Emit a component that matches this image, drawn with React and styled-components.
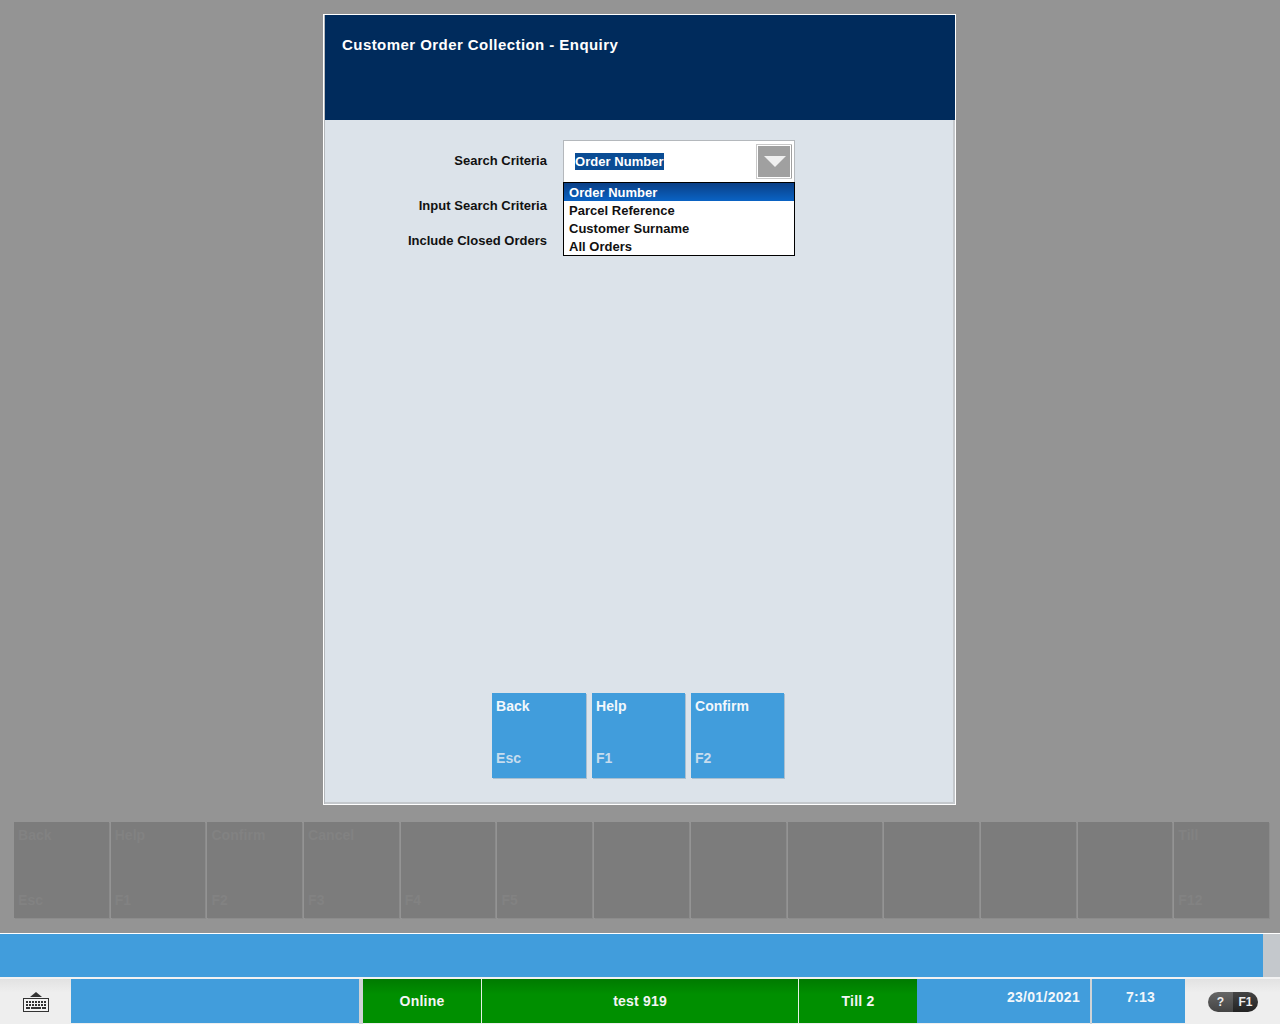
import React from 'react'
import styled, { createGlobalStyle } from 'styled-components'

const GlobalStyle = createGlobalStyle`
    html, body {
        margin: 0;
        padding: 0;
        background: #949494;
    }
    * {
        box-sizing: border-box;
    }
`

const Page = styled.div`
    width: 1280px;
    height: 1024px;
    overflow: hidden;
    display: flex;
    flex-direction: column;
    font-family: "Liberation Sans", Arial, sans-serif;
    font-weight: bold;
`

const Backdrop = styled.div`
    height: 933px;
    padding: 14px 10px 0 14px;
    background: #949494;
    display: flex;
    flex-direction: column;
`

const Dialog = styled.div`
    width: 633px;
    height: 791px;
    margin-left: 309px;
    background: #b4b8bc;
    border: 1px solid #fff;
    padding-left: 1px;
    display: flex;
    flex-direction: column;
`

const DialogHeader = styled.div`
    height: 105px;
    background: #002b5c;
    padding: 20px 17px;
    color: #fff;
    font-size: 15px;
    line-height: 20px;
    letter-spacing: 0.44px;
`

const DialogBody = styled.div`
    flex: 1;
    background: #dce3ea;
    padding: 20px 0 24px 0;
    display: flex;
    flex-direction: column;
    justify-content: space-between;
    border-bottom: 2px solid #c4c8cc;
    border-right: 2px solid #c4c8cc;
`

const Form = styled.div`
    display: grid;
    grid-template-columns: 222px 232px;
    column-gap: 16px;
    align-items: center;
    grid-template-rows: 42px 46px 24px;
`

const Label = styled.div`
    text-align: right;
    font-size: 13px;
    letter-spacing: 0.02px;
    color: #111;
    margin-bottom: ${props => props.$raise || 0}px;
`

const ComboWrap = styled.div`
    position: relative;
    height: 42px;
`

const Combo = styled.div`
    height: 42px;
    background: #fff;
    border: 1px solid #b4b8bc;
    border-bottom: 0;
    padding: 3px 2px 0 11px;
    display: flex;
    align-items: flex-start;
    justify-content: space-between;
`

const Selected = styled.span`
    margin-top: 9px;
    background: #0a4c94;
    color: #fff;
    font-size: 13px;
    line-height: 17px;
    letter-spacing: 0.05px;
`

const ComboButton = styled.div`
    width: 36px;
    height: 35px;
    background: #a0a0a0;
    border: 1px solid #c8c8c8;
    border-right-width: 0;
    outline: 1px solid #fff;
    outline-offset: -2px;
    display: flex;
    align-items: center;
    justify-content: center;
`

const Arrow = styled.div`
    width: 0;
    height: 0;
    border-left: 11px solid transparent;
    border-right: 11px solid transparent;
    border-top: 11px solid #f0f0f0;
`

const Popup = styled.div`
    position: absolute;
    top: 42px;
    left: 0;
    width: 232px;
    height: 74px;
    background: #fff;
    border: 1px solid #000;
`

const Option = styled.div`
    height: 18px;
    padding-left: 5px;
    font-size: 13px;
    line-height: 20px;
    letter-spacing: 0.02px;
    color: ${props => (props.$active ? '#fff' : '#111')};
    background: ${props => (props.$active ? 'linear-gradient(#0a3f86, #0a63c4)' : 'transparent')};
`

const Actions = styled.div`
    display: flex;
    gap: 6px;
    padding-left: 167px;
`

const ActionKey = styled.div`
    width: ${props => props.$w || 94}px;
    height: 85px;
    background: #419ddc;
    box-shadow: 1px 1px 0 #a9bfd0;
    padding: 5px 4px 12px 4px;
    display: flex;
    flex-direction: column;
    justify-content: space-between;
    font-size: 14px;
    line-height: 16px;
    letter-spacing: 0.05px;
    color: #f2f7fb;
`

const KeyHint = styled.span`
    color: #c6dcee;
`

const FnBar = styled.div`
    margin-top: 17px;
    display: grid;
    grid-template-columns: repeat(13, 1fr);
    column-gap: 2px;
    width: 1255px;
`

const FnKey = styled.div`
    height: 96px;
    background: #7c7c7c;
    box-shadow: 1px 1px 0 #8c8c8c;
    padding: 5px 4px 10px 4px;
    display: flex;
    flex-direction: column;
    justify-content: space-between;
    font-size: 14px;
    line-height: 16px;
    letter-spacing: 0.05px;
    color: #828282;
`

const MessageBar = styled.div`
    height: 46px;
    background: #419ddc;
    border-top: 1px solid #fff;
    border-bottom: 2px solid #f2f2f2;
    display: flex;
    justify-content: flex-end;
`

const ScrollStub = styled.div`
    width: 17px;
    background: #c4c8cc;
`

const StatusBar = styled.div`
    height: 45px;
    display: flex;
    background: #eeeeee;
`

const KeyboardCell = styled.div`
    width: 71px;
    display: flex;
    align-items: center;
    justify-content: center;
    background: linear-gradient(#e2e2e2, #eeeeee 30%);
    padding: 0 0 1px 0;
`

const BlueCell = styled.div`
    width: ${props => props.$w}px;
    height: 44px;
    background: #419ddc;
    color: #f2f7fb;
    font-size: 14px;
    letter-spacing: 0.3px;
    display: flex;
    justify-content: ${props => props.$justify || 'center'};
    padding: ${props => props.$pad || '10px 0 0 0'};
    line-height: 16px;
`

const Spacer = styled.div`
    width: ${props => props.$w}px;
    background: #cfd3d6;
`

const GreenCell = styled.div`
    width: ${props => props.$w}px;
    height: 44px;
    background: linear-gradient(#007a00, #008f00 35%);
    color: #f4f4f4;
    font-size: 14px;
    letter-spacing: 0.2px;
    display: flex;
    align-items: center;
    justify-content: center;
    border-right: ${props => (props.$sep ? '1px solid #e6f0e6' : '0')};
`

const HelpCell = styled.div`
    flex: 1;
    background: linear-gradient(#e2e2e2, #eeeeee 30%);
    padding: 13px 0 0 23px;
`

const HelpPill = styled.div`
    width: 50px;
    height: 20px;
    border-radius: 10px;
    overflow: hidden;
    display: flex;
    color: #eee;
    font-size: 12px;
    line-height: 20px;
    text-align: center;
`

const PillPart = styled.div`
    width: 25px;
    background: ${props => props.$bg};
`

const KeyboardIcon = () => (
    <svg width="28" height="21" viewBox="0 0 28 21">
        <path d="M8 6 L14 1 L20 6 Z" fill="#333" />
        <rect x="1.5" y="7.5" width="25" height="13" fill="#f4f4f4" stroke="#333" />
        {[10, 13].map(y =>
            [4, 7, 10, 13, 16, 19, 22].map(x => (
                <rect key={`${x}-${y}`} x={x} y={y} width="2" height="2" fill="#333" />
            ))
        )}
        <rect x="4" y="16" width="4" height="2" fill="#333" />
        <rect x="9" y="16" width="10" height="2" fill="#333" />
        <rect x="20" y="16" width="4" height="2" fill="#333" />
    </svg>
)

const fnKeys = [
    ['Back', 'Esc'],
    ['Help', 'F1'],
    ['Confirm', 'F2'],
    ['Cancel', 'F3'],
    ['', 'F4'],
    ['', 'F5'],
    ['', ''],
    ['', ''],
    ['', ''],
    ['', ''],
    ['', ''],
    ['', ''],
    ['Till', 'F12'],
]

const options = ['Order Number', 'Parcel Reference', 'Customer Surname', 'All Orders']

export default function App() {
    return (
        <Page>
            <GlobalStyle />
            <Backdrop>
                <Dialog>
                    <DialogHeader>Customer Order Collection - Enquiry</DialogHeader>
                    <DialogBody>
                        <Form>
                            <Label $raise={2}>Search Criteria</Label>
                            <ComboWrap>
                                <Combo>
                                    <Selected>Order Number</Selected>
                                    <ComboButton><Arrow /></ComboButton>
                                </Combo>
                                <Popup>
                                    {options.map((o, i) => (
                                        <Option key={o} $active={i === 0}>{o}</Option>
                                    ))}
                                </Popup>
                            </ComboWrap>
                            <Label>Input Search Criteria</Label>
                            <div />
                            <Label>Include Closed Orders</Label>
                            <div />
                        </Form>
                        <Actions>
                            <ActionKey><span>Back</span><KeyHint>Esc</KeyHint></ActionKey>
                            <ActionKey $w={93}><span>Help</span><KeyHint>F1</KeyHint></ActionKey>
                            <ActionKey $w={93}><span>Confirm</span><KeyHint>F2</KeyHint></ActionKey>
                        </Actions>
                    </DialogBody>
                </Dialog>
                <FnBar>
                    {fnKeys.map(([label, hint], i) => (
                        <FnKey key={i}><span>{label}</span><span>{hint}</span></FnKey>
                    ))}
                </FnBar>
            </Backdrop>
            <MessageBar><ScrollStub /></MessageBar>
            <StatusBar>
                <KeyboardCell><KeyboardIcon /></KeyboardCell>
                <BlueCell $w={288} />
                <Spacer $w={4} />
                <GreenCell $w={119} $sep>Online</GreenCell>
                <GreenCell $w={317} $sep>test 919</GreenCell>
                <GreenCell $w={118}>Till 2</GreenCell>
                <BlueCell $w={173} $justify="flex-end" $pad="10px 10px 0 0">23/01/2021</BlueCell>
                <Spacer $w={2} />
                <BlueCell $w={93} $pad="10px 0 0 4px">7:13</BlueCell>
                <HelpCell>
                    <HelpPill>
                        <PillPart $bg="linear-gradient(#666, #444)">?</PillPart>
                        <PillPart $bg="linear-gradient(#444, #222)">F1</PillPart>
                    </HelpPill>
                </HelpCell>
            </StatusBar>
        </Page>
    )
}
